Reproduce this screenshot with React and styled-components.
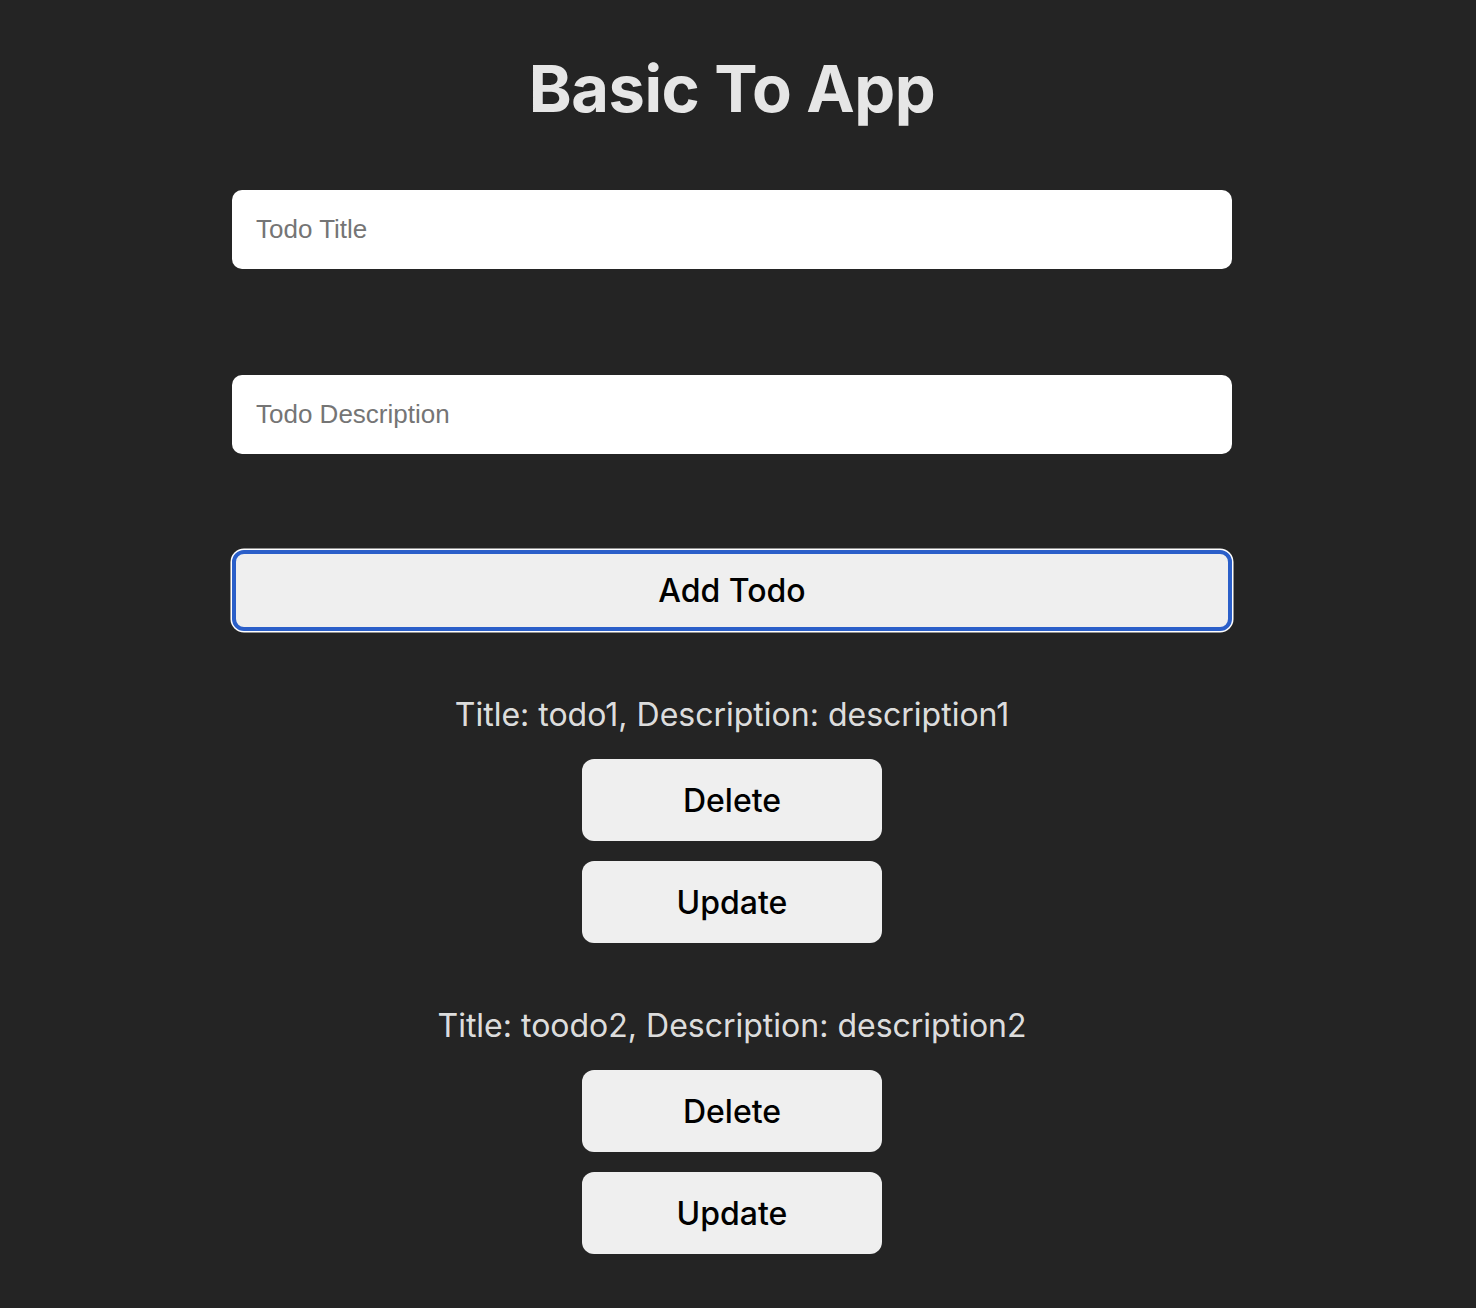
import React from 'react'
import styled, { createGlobalStyle } from 'styled-components'

const GlobalStyle = createGlobalStyle`
    html, body {
        margin: 0;
        padding: 0;
        background: #242424;
    }
    body {
        font-family: Inter, "Noto Sans", sans-serif;
        color: rgba(255, 255, 255, 0.87);
    }
`;

const todos = [
    { id: 1, title: 'todo1', description: 'description1' },
    { id: 2, title: 'toodo2', description: 'description2' },
];

function App(){
    return(
        <>
        <GlobalStyle />
        <Page>
            <Title>Basic To App</Title>
            <Form>
                <Field placeholder="Todo Title" />
                <Field placeholder="Todo Description" />
                <AddButton>Add Todo</AddButton>
            </Form>
            <TodoList>
                {todos.map(todo => (
                    <TodoItem key={todo.id}>
                        <TodoText>Title: {todo.title}, Description: {todo.description}</TodoText>
                        <ItemButton>Delete</ItemButton>
                        <ItemButton>Update</ItemButton>
                    </TodoItem>
                ))}
            </TodoList>
        </Page>
        </>
    );
}

export default App

const Page = styled.div`
    display: flex;
    flex-direction: column;
    align-items: center;
    padding: 54px 12px 20px 0;
`;

const Title = styled.h1`
    margin: 0;
    font-size: 65px;
    line-height: 70px;
    font-weight: 700;
    color: #e6e6e6;
    letter-spacing: -0.5px;
`;

const Form = styled.div`
    width: 1000px;
    display: flex;
    flex-direction: column;
    margin-top: 66px;
`;

const Field = styled.input`
    box-sizing: border-box;
    height: 79px;
    width: 100%;
    border: none;
    border-radius: 10px;
    background: #ffffff;
    padding: 0 24px;
    font-family: "Liberation Sans", Arial, sans-serif;
    font-size: 26px;
    color: #222;
    outline: none;
    & + & {
        margin-top: 106px;
    }
    &::placeholder {
        color: #757575;
    }
`;

const AddButton = styled.button`
    box-sizing: border-box;
    margin-top: 96px;
    width: 100%;
    height: 81px;
    border: 4px solid #2b5fc9;
    border-radius: 12px;
    box-shadow: 0 0 0 1.5px #ffffff;
    background: #efefef;
    font-family: Inter, sans-serif;
    font-size: 32px;
    font-weight: 500;
    color: #000;
    cursor: pointer;
`;

const TodoList = styled.div`
    display: flex;
    flex-direction: column;
    align-items: center;
    gap: 60px;
    margin-top: 61px;
`;

const TodoItem = styled.div`
    display: flex;
    flex-direction: column;
    align-items: center;
    gap: 20px;
`;

const TodoText = styled.div`
    font-size: 32px;
    line-height: 45px;
    margin-bottom: 2px;
    color: rgba(255, 255, 255, 0.87);
`;

const ItemButton = styled.button`
    box-sizing: border-box;
    width: 300px;
    height: 82px;
    border: none;
    border-radius: 12px;
    background: #efefef;
    font-family: Inter, sans-serif;
    font-size: 32px;
    font-weight: 500;
    color: #000;
    cursor: pointer;
`;
